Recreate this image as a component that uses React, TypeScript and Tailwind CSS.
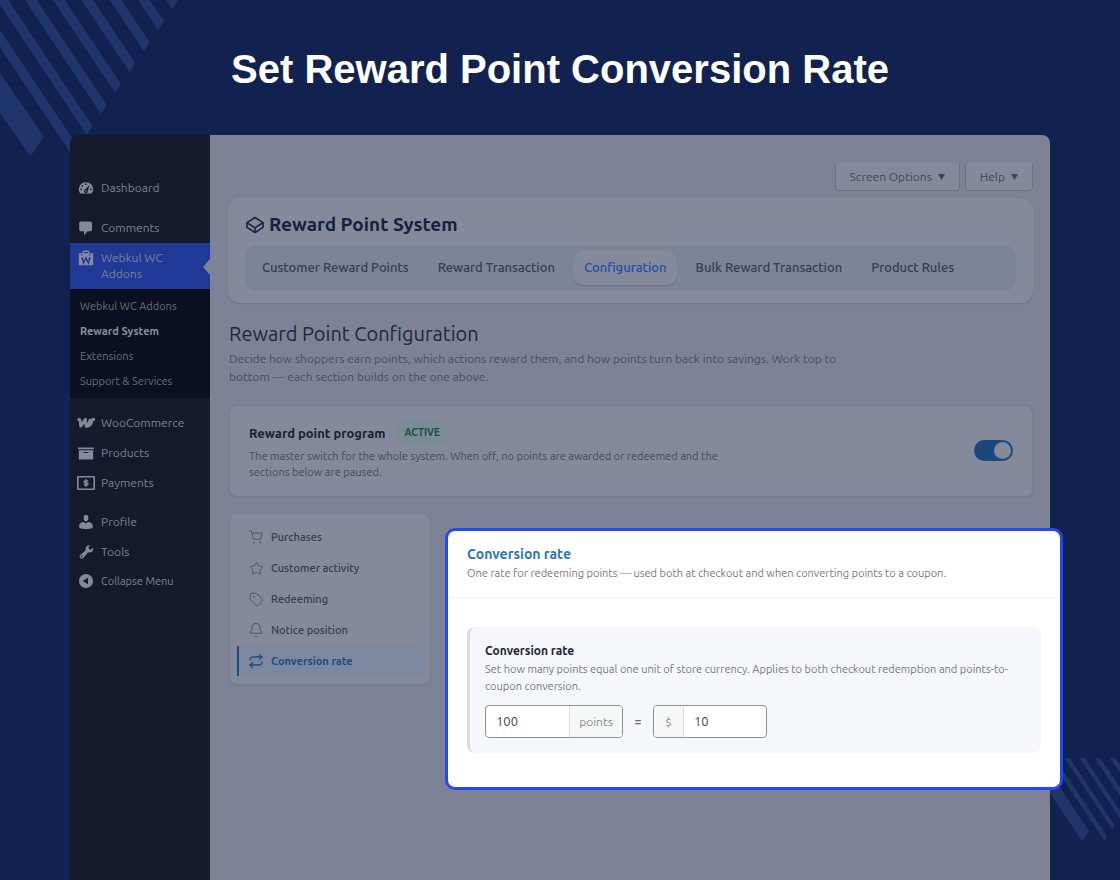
import type { ReactNode } from "react";
import { Bell, Repeat, Star, Tag } from "lucide-react";

const cornerBands = [-1, 0, 1, 2, 3, 4, 5, 6];
const lowerBands = [0, 1, 2, 3, 4];

function CornerStripes() {
  return (
    <svg className="absolute left-0 top-0 h-[160px] w-[180px] text-[#20356c]" viewBox="0 0 180 160" fill="currentColor" aria-hidden="true">
      <polygon points="0,73 44,136.5 30.5,156.5 0,113" />
      {cornerBands.map((k) => {
        const tx = 92.5 + 14.25 * k;
        const ty = 126 - 21 * k;
        return <polygon key={k} points={`${tx},${ty} ${tx - 5.7},${ty + 9} ${tx - 145.7},${ty - 200.5} ${tx - 140},${ty - 209.5}`} />;
      })}
    </svg>
  );
}

function LowerStripes() {
  return (
    <svg className="absolute bottom-0 right-0 h-[122px] w-[120px] text-[#20356c]" viewBox="1000 758 120 122" fill="currentColor" aria-hidden="true">
      <polygon points="1089,831 1082,841 1026.4,758 1040,758" />
      {lowerBands.map((k) => {
        const tx = 1107.3 + 7.6 * k;
        const ty = 837 - 11.4 * k;
        return <polygon key={k} points={`${tx},${ty} ${tx - 2.7},${ty + 4} ${tx - 136.4},${ty - 196} ${tx - 133.7},${ty - 200}`} />;
      })}
    </svg>
  );
}

function MenuIcon({ children }: { children: ReactNode }) {
  return (
    <svg className="size-4 shrink-0 text-[#8489a0]" viewBox="0 0 20 20" fill="currentColor" aria-hidden="true">
      {children}
    </svg>
  );
}

const dashboardIcon = (
  <MenuIcon>
    <path d="M3.2 17h13.6c1.2-1.4 2.2-3.200 2.200-5.200C19 6.800 15 2.800 10 2.800S1 6.800 1 11.800c0 2 .9 3.800 2.200 5.200z" />
    <g fill="#141a2c">
      <circle cx="10" cy="5.300" r="1.100" />
      <circle cx="5.500" cy="7.200" r="1.100" />
      <circle cx="3.800" cy="11.600" r="1.100" />
      <circle cx="16.200" cy="11.600" r="1.100" />
      <path d="M14.600 5.800l-2.300 7.600a2.400 2.400 0 1 1-2.900-1.700z" />
    </g>
    <circle cx="10" cy="13.700" r=".9" />
  </MenuIcon>
);

const commentsIcon = (
  <MenuIcon>
    <path d="M3.500 2h12c1.100 0 2 .9 2 2v8c0 1.100-.9 2-2 2h-3.500l-4.500 5v-5h-4c-1.100 0-2-.9-2-2V4c0-1.100.9-2 2-2z" />
  </MenuIcon>
);

const bagIcon = (
  <MenuIcon>
    <path fillRule="evenodd" d="M1 4h4.500V2.500A2 2 0 0 1 7.500.5h5a2 2 0 0 1 2 2V4H19v15H1zM7 4h6V2.500H7z" />
    <path d="M5 9l2 7 3-6 3 6 2-7" fill="none" stroke="#203896" strokeWidth="1.900" />
    <path d="M5 5v2M15 5v2" stroke="#203896" strokeWidth="1.400" />
  </MenuIcon>
);

const wooIcon = (
  <svg className="h-4 w-5 shrink-0 text-[#8489a0]" viewBox="0 0 20 16" fill="none" stroke="currentColor" strokeWidth="2.800" strokeLinejoin="round" aria-hidden="true">
    <path d="M1.500 4.600h2.200c.9 0 .5 3.200 1 6.600L9.400 4.200l.7 7c2.300-1.500 3.500-4 4.300-7" />
    <path d="M10.100 11.200c2 .6 4.500-1 5.300-3.500l1-3.300h2.600" />
  </svg>
);

const archiveIcon = (
  <MenuIcon>
    <path d="M0 3h20v2.200H0zM1 6.500h18V18H1zM13 10V8.700H7V10z" fillRule="evenodd" />
  </MenuIcon>
);

const paymentsIcon = (
  <svg className="h-4 w-[18px] shrink-0 text-[#8489a0]" viewBox="0 0 18 16" fill="none" stroke="currentColor" aria-hidden="true">
    <rect x=".8" y="1.800" width="16.400" height="12.400" rx=".5" strokeWidth="1.600" />
    <path d="M11.200 6.100H8.200a1 1 0 0 0-1 1c0 .6.500.9 1.100.9h1.400c.7 0 1.200.4 1.200 1s-.5 1-1.200 1H6.800M9 4.300v7.400" strokeWidth="1.500" />
  </svg>
);

const userIcon = (
  <MenuIcon>
    <path d="M10 9.250c-2.270 0-3-2.440-3-3.840C7 3.020 7.820 1 9.970 1 12.200 1 13 3.020 13 5.410c0 1.400-.730 3.840-3 3.840zm0 2.570L12.720 10c3 0 5.700 2.330 5.700 4.530v3s-4 1.400-8.420 1.400-8.420-1.400-8.420-1.400v-3c0-2.250 2.700-4.480 5.650-4.480z" />
  </MenuIcon>
);

const toolsIcon = (
  <MenuIcon>
    <path fillRule="evenodd" d="M17.680 9.270c-1.340 1.340-3.300 1.670-4.950.99l-6.110 7.220c-.99.99-2.890.99-3.880 0s-.99-2.890 0-3.870l7.020-5.920c-.68-1.650-.35-3.610.99-4.950 1.280-1.280 3.120-1.620 4.720-1.060l-2.890 2.890 2.820 2.820 3.360-2.770c.53 1.580.18 3.390-1.080 4.650zM3.810 16.210c.4.39 1.040.39 1.430 0 .4-.4.4-1.040 0-1.430-.39-.4-1.030-.4-1.430 0-.39.39-.39 1.030 0 1.430z" />
  </MenuIcon>
);

const collapseIcon = (
  <MenuIcon>
    <path fillRule="evenodd" d="M10 1.200a8.800 8.800 0 1 0 0 17.600 8.800 8.800 0 0 0 0-17.600zM12.500 5.800v8.400L5.800 10z" />
  </MenuIcon>
);

function MenuItem({ icon, label }: { icon: ReactNode; label: string }) {
  return (
    <a href="#" className="flex h-[30px] items-center gap-[5px] pl-[6px]">
      <span className="flex w-5 shrink-0 justify-center">{icon}</span>
      <span className="whitespace-nowrap">{label}</span>
    </a>
  );
}

const subMenu = ["Webkul WC Addons", "Reward System", "Extensions", "Support & Services"];

function Sidebar() {
  return (
    <nav className="w-[140px] shrink-0 rounded-tl-lg bg-[#141a2c] pt-[38px] text-xs leading-4 text-[#7d8298]">
      <MenuItem icon={dashboardIcon} label="Dashboard" />
      <div className="mt-[10px]">
        <MenuItem icon={commentsIcon} label="Comments" />
      </div>
      <a href="#" className="relative flex items-start gap-[5px] bg-[#203896] pb-[7px] pl-[6px] pr-8 pt-[7px]">
        <span className="flex w-5 shrink-0 justify-center">{bagIcon}</span>
        <span>Webkul WC Addons</span>
        <svg className="absolute right-0 top-4 h-4 w-[7px] text-[#7d8296]" viewBox="0 0 7 16" fill="currentColor" aria-hidden="true">
          <path d="M7 0v16L0 8z" />
        </svg>
      </a>
      <div className="flex flex-col gap-px bg-[#0a0f22] py-[5px] pl-[10px] text-[11px] leading-6 text-[#686e84]">
        {subMenu.map((label) => (
          <a key={label} href="#" className={label === "Reward System" ? "font-bold text-[#8a8fa2]" : ""}>
            {label}
          </a>
        ))}
      </div>
      <div className="mt-[10px]">
        <MenuItem icon={wooIcon} label="WooCommerce" />
        <MenuItem icon={archiveIcon} label="Products" />
        <MenuItem icon={paymentsIcon} label="Payments" />
      </div>
      <div className="mt-[9px]">
        <MenuItem icon={userIcon} label="Profile" />
        <MenuItem icon={toolsIcon} label="Tools" />
        <button type="button" className="flex h-7 items-center gap-[5px] pl-[6px] text-[11px]">
          <span className="flex w-5 shrink-0 justify-center">{collapseIcon}</span>
          Collapse Menu
        </button>
      </div>
    </nav>
  );
}

function ScreenButton({ label }: { label: string }) {
  return (
    <button type="button" className="flex h-7 items-center gap-[6px] rounded-b border border-t-0 border-[#6b7288] bg-[#84899c] px-[14px] text-xs text-[#3d455d]">
      {label}
      <svg className="h-[6px] w-[7px]" viewBox="0 0 7 6" fill="currentColor" aria-hidden="true">
        <path d="M0 0h7L3.500 6z" />
      </svg>
    </button>
  );
}

const tabs = ["Customer Reward Points", "Reward Transaction", "Configuration", "Bulk Reward Transaction", "Product Rules"];

function PluginHeader() {
  return (
    <section className="mt-[7px] rounded-xl bg-[#84899c] px-[17px] pb-3 pt-[13px] shadow-[0_1px_1px_#6d7389]">
      <h1 className="flex items-center gap-[5px] text-[19px] leading-[27px] font-bold text-[#161f3d]">
        <svg className="h-[18px] w-[19px]" viewBox="0 0 19 18" fill="none" stroke="currentColor" strokeWidth="1.600" strokeLinejoin="round" aria-hidden="true">
          <path d="M10 1.500L18 6.700v4.600l-8 5.300-8-5.300V6.700z" />
          <path d="M2 6.700l8 5.200 8-5.200M10 11.900v4.700" />
        </svg>
        Reward Point System
      </h1>
      <div className="mt-[7px] flex gap-[7px] rounded-xl bg-[#7b8499] px-[6px] py-[6px]">
        {tabs.map((tab) => (
          <button
            key={tab}
            type="button"
            className={
              tab === "Configuration"
                ? "h-[34px] rounded-[10px] bg-[#84899c] px-[11px] text-[13px] font-medium whitespace-nowrap text-[#224da6] shadow-[0_1px_1px_#667088]"
                : "h-[34px] px-[11px] text-[13px] font-medium whitespace-nowrap text-[#323c57]"
            }
          >
            {tab}
          </button>
        ))}
      </div>
    </section>
  );
}

function ProgramCard() {
  return (
    <section className="mt-[19px] flex items-center justify-between rounded-lg border border-[#787e92] bg-[#84899c] px-[19px] pb-4 pt-[15px] shadow-[0_1px_1px_#757b8f]">
      <div className="max-w-[490px]">
        <h3 className="flex items-center gap-[10px] text-[13px] leading-6 font-bold text-[#161d35]">
          Reward point program
          <span className="rounded-full border border-[#65968f] bg-[#7b8c98] px-2 text-[10px] leading-[22px] font-bold text-[#12503f]">ACTIVE</span>
        </h3>
        <p className="mt-[3px] text-[11px] leading-4 text-[#42495f]">
          The master switch for the whole system. When off, no points are awarded or redeemed and the sections below are paused.
        </p>
      </div>
      <label className="relative block h-[21px] w-[39px] cursor-pointer">
        <input type="checkbox" defaultChecked aria-label="Reward point program" className="peer size-full cursor-pointer appearance-none rounded-full bg-[#5d647b] checked:bg-[#1a477c]" />
        <span className="pointer-events-none absolute left-[2px] top-[2px] size-[17px] rounded-full bg-[#84899c] peer-checked:left-[20px]" />
      </label>
    </section>
  );
}

const cartIcon = (
  <svg className="size-[14px]" viewBox="0 0 24 24" fill="none" stroke="currentColor" strokeWidth="1.700" strokeLinecap="round" strokeLinejoin="round" aria-hidden="true">
    <path d="M.8 1.500h3.400l3.300 14.300h12.600l2.600-10.600H5.100" />
    <circle cx="8.500" cy="21.300" r="1" />
    <circle cx="19" cy="21.300" r="1" />
  </svg>
);

const sections = [
  { label: "Purchases", icon: cartIcon },
  { label: "Customer activity", icon: <Star size={15} strokeWidth={1.6} /> },
  { label: "Redeeming", icon: <Tag size={15} strokeWidth={1.6} /> },
  { label: "Notice position", icon: <Bell size={16} strokeWidth={1.5} /> },
  { label: "Conversion rate", icon: <Repeat size={16} strokeWidth={1.9} /> },
];

function SectionList() {
  return (
    <nav className="flex w-[202px] shrink-0 flex-col gap-px self-start rounded-lg border border-[#787e92] bg-[#84899c] px-[7px] py-2 text-[11px] font-medium shadow-[0_1px_1px_#757b8f]">
      {sections.map(({ label, icon }) => (
        <a
          key={label}
          href="#"
          className={
            label === "Conversion rate"
              ? "flex h-[30px] items-center gap-[7px] rounded-r border-l-2 border-[#1b4c84] bg-[#7b88a0] pl-[9px] font-bold text-[#1b4c84]"
              : "flex h-[30px] items-center gap-[7px] border-l-2 border-transparent pl-[9px] text-[#343b53]"
          }
        >
          <span className={label === "Conversion rate" ? "flex w-4 justify-center" : "flex w-4 justify-center text-[#4d556d]"}>{icon}</span>
          {label}
        </a>
      ))}
    </nav>
  );
}

function ConversionPanel() {
  return (
    <section className="relative -mr-[30px] mt-[15px] min-w-0 flex-1 rounded-[10px] border-3 border-[#2449f0] bg-white pb-[34px]">
      <header className="border-b border-[#f0f0f2] px-[19px] pb-[15px] pt-[13px]">
        <h2 className="text-sm leading-5 font-bold text-[#2c75b8]">Conversion rate</h2>
        <p className="text-[11px] leading-[18px] text-[#75777e]">
          One rate for redeeming points — used both at checkout and when converting points to a coupon.
        </p>
      </header>
      <div className="mx-[19px] mt-[29px] rounded-lg border-l-3 border-[#dcdce0] bg-[#f6f7fa] pb-[15px] pl-[15px] pr-[26px] pt-[15px]">
        <h3 className="text-xs leading-[18px] font-bold text-[#23252c]">Conversion rate</h3>
        <p className="mt-px text-[11px] leading-[17px] text-[#75777e]">
          Set how many points equal one unit of store currency. Applies to both checkout redemption and points-to-coupon conversion.
        </p>
        <div className="mt-[10px] flex items-center">
          <label className="flex h-[33px] w-[138px] overflow-hidden rounded border border-[#8c8f94] bg-white">
            <input defaultValue="100" aria-label="Points" className="w-[83px] px-[10px] text-[13px] text-[#3c434a] outline-none" />
            <span className="flex flex-1 items-center justify-center border-l border-[#dfe0e2] bg-[#f6f7f7] text-xs text-[#85878c]">points</span>
          </label>
          <span className="w-[30px] text-center text-xs font-bold text-[#6b6d74]">=</span>
          <label className="flex h-[33px] w-[114px] overflow-hidden rounded border border-[#8c8f94] bg-white">
            <span className="flex w-[30px] shrink-0 items-center justify-center border-r border-[#dfe0e2] bg-[#f6f7f7] text-xs text-[#85878c]">$</span>
            <input defaultValue="10" aria-label="Amount" className="min-w-0 flex-1 px-[10px] text-[13px] text-[#3c434a] outline-none" />
          </label>
        </div>
      </div>
    </section>
  );
}

export default function App() {
  return (
    <div className="relative flex min-h-screen flex-col overflow-hidden bg-[#112150] font-['Ubuntu','Noto_Sans',sans-serif]">
      <CornerStripes />
      <LowerStripes />
      <h1 className="relative flex h-[135px] items-center justify-center pt-[2px] font-['Liberation_Sans',Arial,sans-serif] text-[40px] font-bold text-white">
        Set Reward Point Conversion Rate
      </h1>
      <div className="relative mx-[70px] flex flex-1">
        <Sidebar />
        <main className="min-w-0 flex-1 rounded-tr-lg bg-[#7d8296] pb-[90px] pl-[18px] pr-[17px] pt-7">
          <div className="flex justify-end gap-[5px]">
            <ScreenButton label="Screen Options" />
            <ScreenButton label="Help" />
          </div>
          <PluginHeader />
          <div className="pl-px">
            <h2 className="mt-[17px] text-xl leading-7 font-normal text-[#20263f]">Reward Point Configuration</h2>
            <p className="mt-[2px] max-w-[610px] text-xs leading-[18px] text-[#464d64]">
              Decide how shoppers earn points, which actions reward them, and how points turn back into savings. Work top to bottom — each section builds on the one above.
            </p>
            <ProgramCard />
            <div className="mt-4 flex gap-[14px]">
              <SectionList />
              <ConversionPanel />
            </div>
          </div>
        </main>
      </div>
    </div>
  );
}
